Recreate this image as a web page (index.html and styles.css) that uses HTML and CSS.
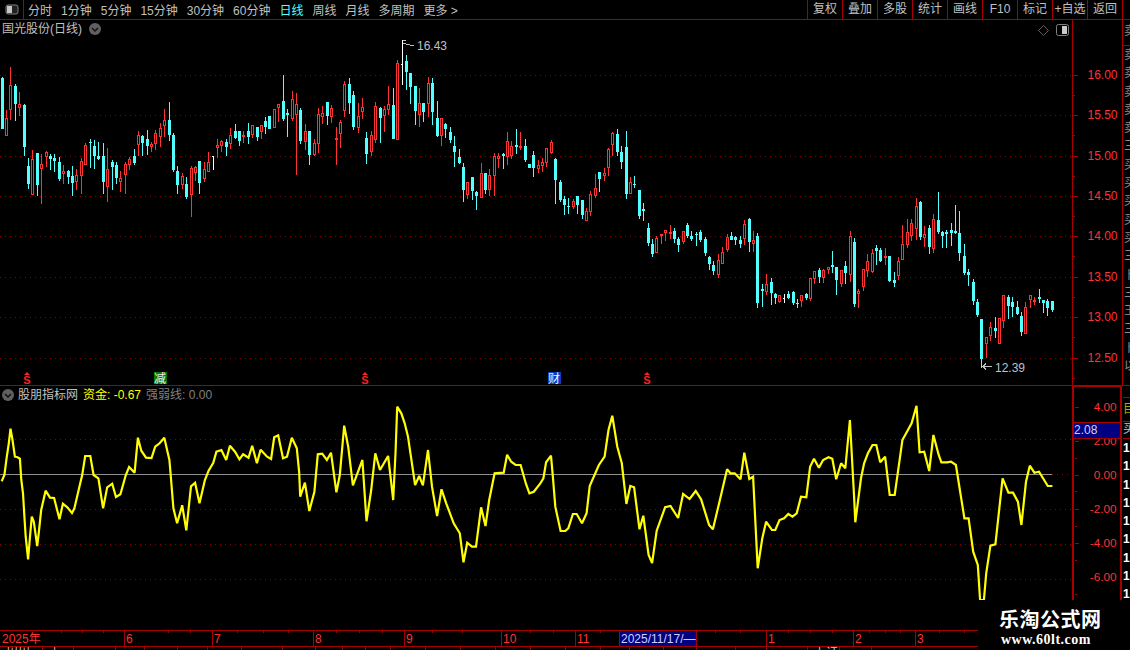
FILE: index.html
```html
<!DOCTYPE html>
<html lang="zh-CN">
<head>
    <meta charset="UTF-8">
    <meta name="viewport" content="width=device-width, initial-scale=1.0">
    <title>国光股份(日线)</title>
    <link rel="stylesheet" href="styles.css">
</head>
<body>
    <div class="toolbar">
        <div class="toolbar-toggle">
            <svg width="14" height="11" viewBox="0 0 14 11"><rect x="1" y="1" width="12" height="9" rx="2" fill="#222" stroke="#808080"/><rect x="2" y="2" width="5" height="7" fill="#c8c8c8"/></svg>
        </div>
        <div class="periods">
            <a>分时</a>
            <a>1分钟</a>
            <a>5分钟</a>
            <a>15分钟</a>
            <a>30分钟</a>
            <a>60分钟</a>
            <a class="active">日线</a>
            <a>周线</a>
            <a>月线</a>
            <a>多周期</a>
            <a>更多 &gt;</a>
        </div>
        <div class="actions">
            <a>复权</a>
            <a>叠加</a>
            <a>多股</a>
            <a>统计</a>
            <a>画线</a>
            <a>F10</a>
            <a>标记</a>
            <a>+自选</a>
            <a>返回</a>
        </div>
    </div>

    <div class="pane price-pane">
        <div class="pane-chart">
            <div class="pane-title">
                <span>国光股份(日线)</span>
                <svg class="chevron" width="12" height="12" viewBox="0 0 12 12"><circle cx="6" cy="6" r="6" fill="#606060"/><path d="M3 5l3 3 3-3" fill="none" stroke="#111" stroke-width="1.5"/></svg>
            </div>
            <div class="pane-tools">
                <svg width="11" height="11" viewBox="0 0 11 11"><path d="M5.5 .5l5 5-5 5-5-5z" fill="none" stroke="#606060"/></svg>
                <svg width="13" height="12" viewBox="0 0 13 12"><rect x=".5" y=".5" width="12" height="11" rx="2" fill="none" stroke="#808080"/><rect x="6" y="2" width="5" height="8" fill="#c8c8c8"/></svg>
            </div>
            <svg id="price-chart" class="chart" viewBox="0 20 1072 365"></svg>
        </div>
        <div class="pane-axis">
            <svg id="price-axis" class="chart" viewBox="1073 20 49 365"></svg>
        </div>
        <div class="pane-side">
            <div class="side-head">卖</div>
            <div class="side-list">
                <span>卖</span><span>卖</span><span>卖</span><span>卖</span><span>卖</span>
                <span>三</span><span>买</span><span>买</span><span>买</span><span>买</span>
                <span>买</span><span>三</span><span>卜</span><span>三</span><span>王</span>
                <span>三</span><span>卜</span><span>以</span>
            </div>
        </div>
    </div>

    <div class="pane indicator-pane">
        <div class="pane-chart">
            <div class="pane-title">
                <svg width="12" height="12" viewBox="0 0 12 12"><circle cx="6" cy="6" r="6" fill="#606060"/><path d="M3 5l3 3 3-3" fill="none" stroke="#111" stroke-width="1.5"/></svg>
                <span>股朋指标网</span>
                <span class="yellow">资金: -0.67</span>
                <span class="grey">强弱线: 0.00</span>
            </div>
            <svg id="indicator-chart" class="chart" viewBox="0 386 1072 244"></svg>
        </div>
        <div class="pane-axis">
            <svg id="indicator-axis" class="chart" viewBox="1074 387 47 243"></svg>
            <div class="cursor-value">2.08</div>
        </div>
        <div class="pane-side">
            <div class="side-gap"></div>
            <div class="side-cell olive">目</div>
            <div class="side-cell">买</div>
            <div class="side-list numbers">
                <span>1</span><span>1</span><span>1</span><span>1</span><span>1</span>
                <span>1</span><span>1</span><span>1</span><span>1</span><span>1</span>
            </div>
        </div>
    </div>

    <svg id="date-axis" class="date-axis" viewBox="0 630 1130 17"></svg>
    <div id="status-row" class="status-row"></div>

    <div class="watermark">
        <div class="watermark-name">乐淘公式网</div>
        <div class="watermark-url">www.60lt.com</div>
    </div>

    <script src="chart.js"></script>
</body>
</html>
```

FILE: styles.css
```css
html, body {
  margin:0;
  padding:0;
  height:650px;
  overflow:hidden;
}
body {
  position:relative;
  background:#000;
  color:#c0c0c0;
  font-family:"Liberation Sans","Noto Sans CJK SC",sans-serif;
  font-size:12px;
}
svg {
  display:block;
}
.toolbar {
  height:20px;
  box-sizing:border-box;
  display:flex;
  align-items:center;
  border-bottom:1px solid #a80000;
}
.toolbar-toggle {
  width:23px;
  height:19px;
  box-sizing:content-box;
  border-right:1px solid #a80000;
  display:flex;
  align-items:center;
  justify-content:center;
}
.periods {
  display:flex;
  gap:9px;
  padding-left:4px;
}
.periods a.active {
  color:#54ffff;
}
.actions {
  display:flex;
  margin-left:auto;
  margin-right:7px;
}
.actions a {
  width:35px;
  height:19px;
  line-height:19px;
  text-align:center;
  border-left:1px solid #a80000;
  box-sizing:border-box;
}
.actions a:last-child {
  width:36px;
  border-right:1px solid #a80000;
}

.pane {
  display:flex;
}
.price-pane {
  height:366px;
  box-sizing:border-box;
  border-bottom:1px solid #a80000;
}
.indicator-pane {
  height:244px;
}
.pane-chart {
  position:relative;
  width:1072px;
  flex:none;
}
.chart {
  width:100%;
  height:100%;
  overflow:visible;
}
.pane-title {
  position:absolute;
  top:2px;
  left:2px;
  display:flex;
  align-items:center;
  gap:4px;
  height:14px;
  line-height:14px;
  white-space:nowrap;
}
.pane-title .chevron {
  margin-left:3px;
}
.yellow {
  color:#ffff00;
  margin-left:1px;
}
.grey {
  color:#808080;
  margin-left:1px;
}
.pane-tools {
  position:absolute;
  top:4px;
  right:3px;
  display:flex;
  align-items:center;
  gap:7px;
}
.pane-axis {
  position:relative;
  flex:none;
  width:50px;
  box-sizing:border-box;
  border-left:1px solid #a80000;
}
.indicator-pane .pane-axis {
  width:50px;
  border-left:2px solid #a80000;
  border-right:2px solid #a80000;
  border-top:1px solid #a80000;
}
.cursor-value {
  position:absolute;
  top:35px;
  left:0;
  right:0;
  height:15px;
  line-height:15px;
  background:#000080;
  color:#d0d0ff;
  border-top:1px solid #a80000;
  border-bottom:1px solid #a80000;
  font-size:12px;
}
.pane-side {
  flex:1;
  min-width:0;
  overflow:hidden;
  border-left:1px solid #a80000;
  color:#8c8c8c;
  padding-left:1px;
}
.indicator-pane .pane-side {
  border-left:0;
}
.side-head {
  height:25px;
  line-height:22px;
  margin-left:-1px;
  padding-left:1px;
  border-bottom:1px solid #a80000;
}
.side-list span {
  display:block;
  height:18.3px;
  line-height:18px;
}
.side-gap {
  height:11px;
  border-bottom:1px solid #a80000;
}
.side-cell {
  height:23px;
  line-height:23px;
  border-bottom:1px solid #a80000;
  color:#c0c0c0;
}
.side-cell + .side-cell {
  height:16px;
  line-height:15px;
}
.side-cell.olive {
  color:#a8a800;
}
.numbers {
  color:#fff;
  font-weight:bold;
}

.date-axis {
  width:1130px;
  height:17px;
}
.status-row {
  display:flex;
  height:3px;
  overflow:hidden;
}
.status-row div {
  flex:none;
  box-sizing:border-box;
  height:3px;
  border-right:1px solid #a80000;
  line-height:13px;
  padding-left:6px;
  white-space:nowrap;
  overflow:hidden;
  color:#c0c0c0;
}
.status-row .up {
  color:#54ffff;
}

.watermark {
  position:absolute;
  left:978px;
  top:600px;
  width:152px;
  height:50px;
  background:#000;
  color:#fff;
  padding:7px 0 0 21px;
  box-sizing:border-box;
}
.watermark-name {
  font-family:"Noto Sans CJK SC",sans-serif;
  font-weight:bold;
  font-size:20px;
  line-height:24px;
  letter-spacing:.5px;
}
.watermark-url {
  font-family:"Liberation Serif",serif;
  font-weight:bold;
  font-size:14px;
  line-height:16px;
  letter-spacing:.5px;
  margin-top:1px;
  margin-left:2px;
}

.axis-text {
  font-size:12px;
  fill:#ff3232;
}
.note-text {
  font-size:12px;
  fill:#c0c0c0;
}
.mark-s {
  font-size:11px;
  font-weight:bold;
  fill:#ff2020;
}
.mark-box {
  font-size:12px;
  fill:#f0f0f0;
}
.cursor-date {
  font-size:12px;
  fill:#d0d0ff;
}
```

FILE: chart.js
```js
// candles: [x, type, high, bodyTop, bodyBottom, low], read per stretch of the chart
// x and y are in the stretch's own units, 1/3 px from ox / oy
var stretches = [
  { ox: 0, oy: 60, rows: [
    [7,'c',50,55,207,207],[19,'r',150,175,227,227],[31,'r',20,75,150,180],[46,'c',72,78,132,183],
    [58,'r',96,132,143,168],[73,'c',132,136,261,288],[85,'c',295,318,372,387],[97,'r',270,297,404,404],
    [112,'c',279,279,375,408],[124,'r',282,312,326,432],[139,'r',273,276,291,320],[151,'c',282,288,297,330],
    [163,'c',282,294,303,336],[178,'c',291,306,358,362],[190,'r',316,334,342,372],[205,'c',330,333,351,372],
    [217,'c',318,348,369,408],[229,'r',327,345,366,390],[244,'r',294,303,348,402],[256,'r',249,255,315,315],
    [271,'c',237,246,249,324],[283,'c',240,258,288,327],[295,'c',246,288,297,300],[310,'c',249,288,366,402],
    [322,'r',264,327,381,426],[337,'c',300,306,321,390],[349,'c',306,315,354,372],[361,'r',333,354,366,396],
    [376,'r',306,312,345,402],[388,'r',291,297,315,330],[403,'c',267,288,309,315],[415,'r',213,225,255,288],
    [427,'c',225,228,249,288],[442,'c',210,237,258,285],[454,'r',246,252,261,276],[466,'r',210,219,252,270],
    [481,'r',189,204,231,261],[493,'r',147,180,198,231],[508,'c',126,180,225,243],[520,'c',219,225,330,336],
    [532,'c',318,333,375,402],[547,'r',339,348,375,387],[559,'c',351,372,411,417],[574,'r',318,324,405,471],
    [586,'r',318,321,339,363],[598,'c',303,303,369,402],[613,'r',306,327,357,366],[625,'r',276,306,336,336],
    [640,'w',288,288,291,330],[652,'r',237,255,264,294],[664,'r',240,243,258,276],[679,'c',237,246,261,288],
    [691,'r',204,225,252,267],[706,'c',192,213,234,237],[718,'c',213,213,243,258],[730,'r',213,225,231,249],
    [745,'c',189,213,231,252],[757,'r',195,195,225,234],[772,'c',201,201,231,243],[784,'r',195,195,216,237],
    [796,'c',171,183,201,222],[808,'c',168,168,207,207]
  ]},
  { ox: 270, oy: 40, rows: [
    [13,'r',208,208,264,264],[25,'r',192,192,204,246],[40,'c',105,183,237,243],[52,'c',207,219,225,291],
    [67,'r',153,177,237,243],[79,'r',159,192,225,405],[91,'c',204,210,303,312],[106,'r',252,273,306,330],
    [118,'c',273,273,345,375],[133,'r',297,309,345,348],[145,'r',204,222,312,339],[157,'r',198,219,231,252],
    [172,'c',186,186,228,255],[184,'r',195,204,231,249],[199,'r',261,294,300,375],[211,'r',240,246,282,324],
    [223,'r',123,132,213,231],[238,'c',114,132,189,222],[250,'c',153,165,261,270],[265,'r',189,228,264,279],
    [277,'r',174,201,216,237],[289,'c',276,294,342,372],[304,'r',273,285,336,348],[316,'r',186,198,300,309],
    [331,'c',201,204,234,309],[343,'r',198,207,228,276],[355,'r',138,192,210,225],[370,'c',144,195,297,297],
    [382,'r',60,69,300,300],[397,'w',0,72,75,135],[409,'c',45,63,96,150],[421,'c',99,99,141,192],
    [436,'c',138,138,213,255],[448,'r',144,189,225,261],[460,'c',189,189,216,246],[475,'r',111,129,192,231],
    [487,'c',114,129,216,255],[502,'c',183,234,288,291],[514,'r',234,234,288,318],[526,'c',249,252,267,294],
    [541,'c',261,276,300,309],[553,'c',288,318,336,381],[568,'c',327,351,369,372],[580,'c',369,381,450,486],
    [592,'r',426,427,465,477],[607,'c',411,411,453,480],[619,'c',453,456,468,510],[634,'r',369,399,474,474],
    [646,'c',399,399,450,462],[658,'r',387,405,450,468],[673,'r',339,348,408,468],[685,'r',339,348,357,384],
    [700,'c',339,342,348,387],[712,'r',276,303,351,375],[724,'r',303,318,348,357],[739,'c',267,315,321,342],
    [751,'r',276,318,324,330],[766,'c',297,318,360,366],[778,'c',372,372,384,384],[790,'c',333,345,384,411],
    [805,'r',360,375,387,399]
  ]},
  { ox: 540, oy: 120, rows: [
    [7,'r',114,126,138,156],[19,'r',84,84,129,141],[34,'r',60,66,99,102],[46,'c',114,117,180,252],
    [61,'c',180,186,240,246],[73,'c',228,237,255,285],[85,'c',234,258,261,282],[100,'r',237,243,261,267],
    [112,'c',228,228,255,282],[127,'c',240,240,285,297],[139,'r',264,273,303,303],[151,'r',213,222,276,288],
    [166,'r',162,204,228,234],[178,'c',156,156,177,216],[193,'r',144,159,168,183],[205,'r',84,87,144,168],
    [217,'r',36,39,75,108],[232,'c',27,42,96,108],[244,'c',78,96,126,147],[259,'c',33,81,222,237],
    [271,'r',171,186,222,222],[283,'c',168,192,195,204],[298,'c',210,210,288,297],[310,'c',249,267,273,303],
    [325,'c',309,324,369,378],[337,'c',357,372,402,411],[349,'r',348,354,399,399],[364,'r',342,342,348,372],
    [376,'r',330,330,339,363],[391,'r',315,336,342,357],[403,'c',324,333,357,369],[415,'c',351,357,375,396],
    [430,'r',333,333,366,372],[442,'c',309,315,348,354],[454,'c',333,348,357,363],[469,'c',336,342,345,378],
    [481,'c',330,336,360,366],[496,'c',351,357,399,408],[508,'c',408,411,432,450],[520,'c',423,435,453,465],
    [535,'r',402,420,465,474],[547,'r',381,396,432,432],[562,'r',342,351,390,396],[574,'c',336,348,360,360],
    [586,'c',348,351,360,375],[601,'c',348,360,372,384],[613,'r',300,312,357,375],[628,'c',294,297,366,396],
    [640,'r',333,360,372,396],[652,'c',339,348,549,564],[667,'c',492,507,513,561],[679,'r',462,492,516,525],
    [694,'c',474,486,519,555],[706,'c',519,522,534,552],[718,'r',525,525,546,549],[733,'w',522,534,537,549],
    [745,'c',513,522,534,537],[760,'c',513,516,549,555],[772,'c',537,549,552,564],[784,'r',525,525,543,561],
    [799,'c',519,522,534,540]
  ]},
  { ox: 800, oy: 180, rows: [
    [31,'r',294,294,357,363],[43,'r',273,273,297,312],[58,'c',264,270,291,309],[70,'r',267,270,294,309],
    [85,'r',261,261,270,282],[97,'c',213,255,261,279],[109,'c',261,261,300,345],[124,'r',270,270,312,321],
    [136,'c',243,258,279,312],[151,'r',153,168,285,306],[163,'c',174,186,372,381],[175,'r',327,333,342,384],
    [190,'r',267,267,321,333],[202,'r',222,243,273,291],[217,'r',207,219,276,279],[229,'c',195,204,213,255],
    [241,'c',204,210,243,246],[256,'r',204,228,234,255],[268,'c',228,228,303,306],[283,'c',276,300,309,321],
    [295,'r',231,243,288,300],[307,'r',135,192,240,240],[322,'r',117,156,195,204],[334,'r',117,129,168,183],
    [349,'r',54,78,147,180],[361,'c',63,66,171,180],[373,'r',138,162,174,201],[388,'c',135,144,201,222],
    [400,'r',102,117,207,219],[415,'c',36,120,156,162],[427,'c',153,156,168,204],[439,'c',150,156,162,204],
    [454,'c',129,150,159,198],[466,'c',75,153,159,162],[478,'c',93,159,219,243],[493,'c',192,228,279,285],
    [505,'c',267,276,285,318],[520,'c',297,306,363,375],[532,'c',357,366,405,411],[544,'c',417,417,537,564],
    [559,'r',471,471,492,534],[571,'r',426,441,468,483],[586,'c',411,444,453,474],[598,'r',414,414,492,492],
    [610,'r',345,345,423,444],[625,'c',345,351,378,417],[637,'c',351,366,381,411],[652,'c',363,381,402,405],
    [664,'c',396,408,456,468],[676,'r',366,381,462,462],[691,'r',345,345,360,384],[703,'r',351,360,366,375],
    [718,'c',327,351,357,369],[730,'c',360,360,369,399],[742,'c',357,363,384,408],[757,'c',363,363,390,396]
  ]}
];

// money line, first part x/2.958 second part 530 + x/2.613, y/3 + 400
var lineLeft = [5,244,13,225,20,170,26,130,31,86,37,120,44,170,52,172,59,176,63,240,68,280,72,345,76,410,83,478,88,420,94,350,100,365,110,438,115,395,122,330,135,272,148,293,160,294,176,358,186,311,199,322,213,339,220,325,235,260,243,225,252,168,267,168,277,225,291,235,305,325,317,262,332,251,343,291,356,283,372,225,382,201,398,218,408,113,418,152,432,173,448,174,459,140,472,130,486,113,501,180,506,240,513,325,524,370,539,316,551,391,565,259,577,248,590,310,606,240,617,212,631,188,640,155,655,150,669,180,680,137,695,155,708,178,719,163,735,173,746,137,760,190,771,149,790,170,802,177,811,112,823,106,837,175,849,170,863,113,878,145,885,218,888,290,902,248,915,333,930,275,940,163,953,161,967,180,979,158,995,277,1005,225,1018,77,1030,140,1044,256,1072,180,1078,270,1084,364,1098,270,1110,160,1124,210,1148,168,1157,245,1163,300,1170,160,1175,20,1187,40,1197,70,1207,110,1228,255,1240,228,1251,256,1266,150,1278,260,1293,348,1306,268,1320,310,1342,370,1360,400,1371,487,1382,428,1396,440,1408,440,1423,322,1436,378,1447,300,1463,220,1490,218,1500,164,1512,185,1525,195,1540,195,1556,252,1566,280];
var lineRight = [0,280,10,275,27,250,35,235,42,187,55,167,60,235,66,320,80,393,92,393,100,385,112,342,122,342,136,370,148,340,156,258,180,195,195,170,205,90,215,47,228,140,240,190,252,312,262,258,272,262,286,388,296,347,310,465,319,489,331,392,353,322,367,318,387,354,400,282,417,297,433,273,447,298,468,375,478,388,492,320,515,208,524,220,535,220,550,238,560,158,573,237,583,230,595,505,607,415,617,365,632,390,641,390,652,360,664,355,675,342,686,350,697,340,708,290,722,292,732,200,742,176,755,203,766,180,780,172,790,176,800,238,813,190,824,205,836,60,847,290,850,367,865,235,873,190,883,160,895,135,905,135,915,187,928,170,940,285,953,285,973,120,997,70,1010,17,1018,157,1030,155,1043,213,1054,105,1068,165,1075,187,1090,187,1100,185,1113,195,1135,355,1146,355,1158,455,1170,495,1176,600,1186,600,1192,520,1203,437,1216,433,1235,235,1250,278,1262,278,1275,305,1284,375,1296,245,1306,197,1318,218,1330,215,1353,258,1365,258];

var RED = '#ff3232', CYAN = '#54ffff', LINE_RED = '#a80000', DOT_RED = '#8a0000';

function dotted(y, x1, x2) {
    return '<line x1="' + x1 + '" x2="' + x2 + '" y1="' + (y + .5) + '" y2="' + (y + .5) +
        '" stroke="' + DOT_RED + '" stroke-dasharray="1 4" shape-rendering="crispEdges"/>';
}

function rect(x, y, w, h, fill) {
    return '<rect x="' + x + '" y="' + y + '" width="' + w + '" height="' + h + '" fill="' + fill + '" shape-rendering="crispEdges"/>';
}

function text(x, y, str, cls, anchor) {
    return '<text x="' + x + '" y="' + y + '" class="' + cls + '"' + (anchor ? ' text-anchor="' + anchor + '"' : '') + '>' + str + '</text>';
}

function candle(s, row) {
    var x = Math.floor(s.ox + row[0] / 3);
    var hi = Math.round(s.oy + row[2] / 3);
    var top = Math.round(s.oy + row[3] / 3);
    var bot = Math.round(s.oy + row[4] / 3);
    var lo = Math.round(s.oy + row[5] / 3);
    var type = row[1];
    var out = '';
    if (type == 'w') {
        out += rect(x, hi, 1, lo - hi, '#fff');
        out += rect(x - 1, top, 2, 1, '#fff');
        return out;
    }
    out += rect(x, hi, 1, Math.max(lo - hi, 1), type == 'c' ? CYAN : RED);
    if (type == 'c') {
        out += rect(x - 1, top, 3, Math.max(bot - top, 1), CYAN);
    } else {
        out += '<rect x="' + (x - .5) + '" y="' + (top + .5) + '" width="2" height="' + Math.max(bot - top - 1, 1) +
            '" fill="#000" stroke="' + RED + '" shape-rendering="crispEdges"/>';
    }
    return out;
}

function drawPrice() {
    var grid = [75, 115, 156, 196, 236, 277, 317, 358];
    var html = '';
    grid.forEach(function(y) { html += dotted(y, 0, 1072); });
    stretches.forEach(function(s) {
        s.rows.forEach(function(row) { html += candle(s, row); });
    });

    // high and low notes
    html += '<path d="M403 40.5h3M403 43.5h2l2 1h2l2 1h3M992 366.5h-9M986 363.5l-3 3 3 3" fill="none" stroke="#c0c0c0" shape-rendering="crispEdges"/>';
    html += text(417, 50, '16.43', 'note-text');
    html += text(995, 372, '12.39', 'note-text');

    // event marks on the bottom row
    [27, 365, 647].forEach(function(x) {
        html += '<path d="M' + x + ' 372l3 3h-6z" fill="#ff2020"/>';
        html += text(x, 384, 'S', 'mark-s', 'middle');
    });
    html += rect(154, 372, 13, 12, '#007a00') + text(154, 383, '减', 'mark-box');
    html += rect(548, 372, 13, 12, '#0a3cc8') + text(548, 383, '财', 'mark-box');
    document.getElementById('price-chart').innerHTML = html;

    var labels = ['16.00', '15.50', '15.00', '14.50', '14.00', '13.50', '13.00', '12.50'];
    var axis = '';
    grid.forEach(function(y, i) {
        axis += rect(1073, y, 5, 1, LINE_RED);
        axis += rect(1073, Math.round(y + 20), 2, 1, LINE_RED);
        axis += text(1117.5, y + 4, labels[i], 'axis-text', 'end');
    });
    document.getElementById('price-axis').innerHTML = axis;
}

function drawIndicator() {
    var html = '';
    [439, 509, 544, 579].forEach(function(y) { html += dotted(y, 0, 1072); });
    html += rect(0, 474, 1052, 1, '#909090') + dotted(474, 1052, 1072);

    var pts = [];
    for (var i = 0; i < lineLeft.length; i += 2) {
        pts.push((lineLeft[i] / 2.958).toFixed(1) + ',' + (400 + lineLeft[i + 1] / 3).toFixed(1));
    }
    for (i = 2; i < lineRight.length; i += 2) {
        pts.push((530 + lineRight[i] / 2.613).toFixed(1) + ',' + (400 + lineRight[i + 1] / 3).toFixed(1));
    }
    html += '<polyline points="' + pts.join(' ') + '" fill="none" stroke="#ffff00" stroke-width="2.2" stroke-linejoin="miter" stroke-miterlimit="2"/>';
    document.getElementById('indicator-chart').innerHTML = html;

    var ticks = [[405, '4.00'], [440, '2.00'], [474, '0.00'], [509, '-2.00'], [544, '-4.00'], [579, '-6.00']];
    var axis = '';
    ticks.forEach(function(t) {
        axis += rect(1075, t[0], 4, 1, LINE_RED);
        axis += rect(1075, t[0] + 17, 2, 1, LINE_RED);
        axis += text(1117.5, t[0] + 4, t[1], 'axis-text', 'end');
    });
    document.getElementById('indicator-axis').innerHTML = axis;
}

function drawDates() {
    var html = rect(0, 630, 978, 1, LINE_RED) + rect(0, 646, 1130, 1, LINE_RED);
    [61, 82, 103, 168, 190, 237, 263, 288, 336, 359, 382, 432, 462, 530, 553, 600, 715, 740, 788, 810, 832, 869, 885, 900, 939, 964].forEach(function(x) {
        html += rect(x, 631, 1, 2, LINE_RED);
    });
    var months = [[124, '6'], [212, '7'], [313, '8'], [404, '9'], [501, '10'], [575, '11'], [766, '1'], [853, '2'], [915, '3']];
    months.forEach(function(m) {
        html += rect(m[0], 631, 1, 15, LINE_RED);
        html += text(m[0] + 2, 643, m[1], 'axis-text');
    });
    html += text(2, 643, '2025年', 'axis-text');
    html += rect(619, 631, 78, 15, '#000080') + rect(619, 631, 1, 15, LINE_RED) + rect(696, 631, 1, 15, LINE_RED);
    html += text(621, 643, '2025/11/17/—', 'cursor-date');
    document.getElementById('date-axis').innerHTML = html;
}

function drawStatus() {
    var stops = [42, 73, 115, 144, 177, 207, 241, 282, 315, 342, 365, 390, 425, 460, 495, 530, 565, 600, 629, 663, 696, 735, 766, 807, 839, 871, 978];
    var row = document.getElementById('status-row');
    var last = 0;
    stops.forEach(function(x, i) {
        var cell = document.createElement('div');
        cell.style.width = (x - last + 1) + 'px';
        if (i == 0) cell.textContent = '川川';
        if (i == 1) cell.textContent = '上';
        if (i == 24) { cell.textContent = '上证'; cell.className = 'up'; }
        row.appendChild(cell);
        last = x + 1;
    });
}

drawPrice();
drawIndicator();
drawDates();
drawStatus();
```
